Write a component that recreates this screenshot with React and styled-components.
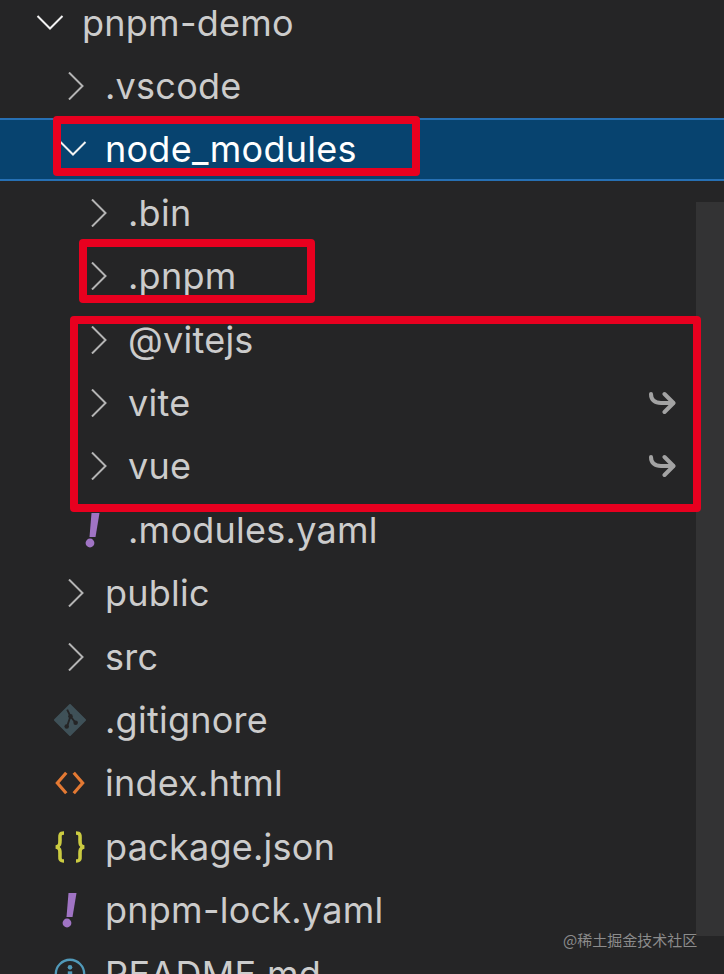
import React from "react";
import styled, { createGlobalStyle } from "styled-components";

const GlobalStyle = createGlobalStyle`
  html, body {
    margin: 0;
    padding: 0;
    background: #252526;
  }
`;

const Chevron = ({ open }) => (
  <svg width="28" height="28" viewBox="0 0 28 28" fill="none" stroke={open ? "#f2f2f2" : "#b4b4b4"} strokeWidth="2">
    {open ? <path d="M1.5 7 L14 19.5 L26.5 7" /> : <path d="M10 0.5 L23.5 14 L10 27.5" />}
  </svg>
);

const GitIcon = () => (
  <svg width="32" height="32" viewBox="0 0 34 34">
    <path d="M17 1 L33 17 L17 33 L1 17 Z" fill="#3f5158" stroke="#3f5158" strokeWidth="2" strokeLinejoin="round" />
    <path d="M14 6 L17.5 13 L13.5 25 M17.5 13 L23 20" fill="none" stroke="#252526" strokeWidth="2" />
    <circle cx="17.5" cy="13" r="2.4" fill="#252526" />
    <circle cx="13.5" cy="24" r="2.4" fill="#252526" />
    <circle cx="23" cy="20" r="2.4" fill="#252526" />
  </svg>
);

const HtmlIcon = () => (
  <svg width="30" height="28" viewBox="0 0 32 28" fill="none" stroke="#e37933" strokeWidth="3.4">
    <path d="M12 3 L2.5 14 L12 25" />
    <path d="M20 3 L29.5 14 L20 25" />
  </svg>
);

const JsonIcon = () => (
  <svg width="32" height="32" viewBox="0 0 32 32" fill="none" stroke="#cbcb41" strokeWidth="3.6">
    <path d="M10 2 C5 2 6 5 6 9 C6 13 6 15 2 16 C6 17 6 19 6 23 C6 27 5 30 10 30" />
    <path d="M22 2 C27 2 26 5 26 9 C26 13 26 15 30 16 C26 17 26 19 26 23 C26 27 27 30 22 30" />
  </svg>
);

const YamlIcon = () => (
  <svg width="18" height="36" viewBox="0 0 18 36">
    <path d="M7.5 1 L15.5 1 L11.5 25 L5.5 25 Z" fill="#a074c4" />
    <circle cx="6" cy="31" r="4.4" fill="#a074c4" />
  </svg>
);

const InfoIcon = () => (
  <svg width="36" height="36" viewBox="0 0 36 36" fill="none">
    <circle cx="18" cy="18" r="16" stroke="#519aba" strokeWidth="2.6" />
    <circle cx="18" cy="10.5" r="2.6" fill="#519aba" />
    <rect x="15.5" y="15" width="5" height="13" fill="#519aba" />
  </svg>
);

const LinkArrow = () => (
  <svg width="28" height="24" viewBox="0 0 28 24" fill="none" stroke="#a3a3a3" strokeWidth="4" strokeLinecap="round" strokeLinejoin="round">
    <path d="M3 3 C3 9 7 12 13 12 L25 12" />
    <path d="M16.5 3 L25.5 12 L16.5 21" />
  </svg>
);

const fileIcons = {
  git: <GitIcon />,
  html: <HtmlIcon />,
  json: <JsonIcon />,
  yaml: <YamlIcon />,
  info: <InfoIcon />,
};

const rows = [
  { name: "pnpm-demo", depth: 0, folder: "open" },
  { name: ".vscode", depth: 1, folder: "closed" },
  { name: "node_modules", depth: 1, folder: "open", selected: true },
  { name: ".bin", depth: 2, folder: "closed" },
  { name: ".pnpm", depth: 2, folder: "closed" },
  { name: "@vitejs", depth: 2, folder: "closed" },
  { name: "vite", depth: 2, folder: "closed", link: true },
  { name: "vue", depth: 2, folder: "closed", link: true },
  { name: ".modules.yaml", depth: 2, icon: "yaml" },
  { name: "public", depth: 1, folder: "closed" },
  { name: "src", depth: 1, folder: "closed" },
  { name: ".gitignore", depth: 1, icon: "git" },
  { name: "index.html", depth: 1, icon: "html" },
  { name: "package.json", depth: 1, icon: "json" },
  { name: "pnpm-lock.yaml", depth: 1, icon: "yaml" },
  { name: "README.md", depth: 1, icon: "info" },
];

export default function App() {
  return (
    <Screen>
      <GlobalStyle />
      <Tree>
        {rows.map((row) => (
          <Row key={row.name} $depth={row.depth} $selected={row.selected}>
            <IconSlot $folder={!!row.folder}>
              {row.folder ? <Chevron open={row.folder === "open"} /> : fileIcons[row.icon]}
            </IconSlot>
            <Label $selected={row.selected}>{row.name}</Label>
            {row.link && (
              <LinkSlot>
                <LinkArrow />
              </LinkSlot>
            )}
          </Row>
        ))}
      </Tree>
      <ScrollThumb />
      <RedBox $left={53} $top={116} $width={367} $height={60} />
      <RedBox $left={79} $top={239} $width={236} $height={64} />
      <RedBox $left={70} $top={316} $width={631} $height={196} />
      <Watermark>@稀土掘金技术社区</Watermark>
    </Screen>
  );
}

const Screen = styled.div`
  position: relative;
  width: 724px;
  height: 974px;
  overflow: hidden;
  background: #252526;
`;

const Tree = styled.div`
  display: flex;
  flex-direction: column;
  margin-top: -9px;
`;

const Row = styled.div`
  display: flex;
  align-items: center;
  box-sizing: border-box;
  height: 63.4px;
  flex-shrink: 0;
  padding-left: ${(props) => 36 + props.$depth * 23}px;
  background: ${(props) => (props.$selected ? "#07436f" : "transparent")};
  border-top: 2px solid ${(props) => (props.$selected ? "#2670b4" : "transparent")};
  border-bottom: 2px solid ${(props) => (props.$selected ? "#2670b4" : "transparent")};
`;

const IconSlot = styled.div`
  display: flex;
  align-items: center;
  justify-content: ${(props) => (props.$folder ? "flex-start" : "center")};
  width: ${(props) => (props.$folder ? "46px" : "32px")};
  margin-left: ${(props) => (props.$folder ? "0" : "-5px")};
  padding-right: ${(props) => (props.$folder ? "0" : "19px")};
  flex-shrink: 0;
`;

const Label = styled.span`
  font-family: Inter, "Liberation Sans", sans-serif;
  font-size: 36px;
  letter-spacing: 0.25px;
  line-height: 1;
  color: ${(props) => (props.$selected ? "#ffffff" : "#cccccc")};
  white-space: nowrap;
`;

const LinkSlot = styled.div`
  display: flex;
  margin-left: auto;
  margin-right: 48px;
`;

const ScrollThumb = styled.div`
  position: absolute;
  left: 696px;
  top: 202px;
  width: 28px;
  height: 734px;
  background: #333334;
`;

const RedBox = styled.div`
  position: absolute;
  left: ${(props) => props.$left}px;
  top: ${(props) => props.$top}px;
  width: ${(props) => props.$width}px;
  height: ${(props) => props.$height}px;
  box-sizing: border-box;
  border: 8px solid #e8001f;
  border-radius: 4px;
`;

const Watermark = styled.div`
  position: absolute;
  left: 563px;
  top: 931px;
  font-family: "Noto Sans CJK SC", "Liberation Sans", sans-serif;
  font-size: 15px;
  line-height: 18px;
  color: #8c8c8c;
  white-space: nowrap;
`;
